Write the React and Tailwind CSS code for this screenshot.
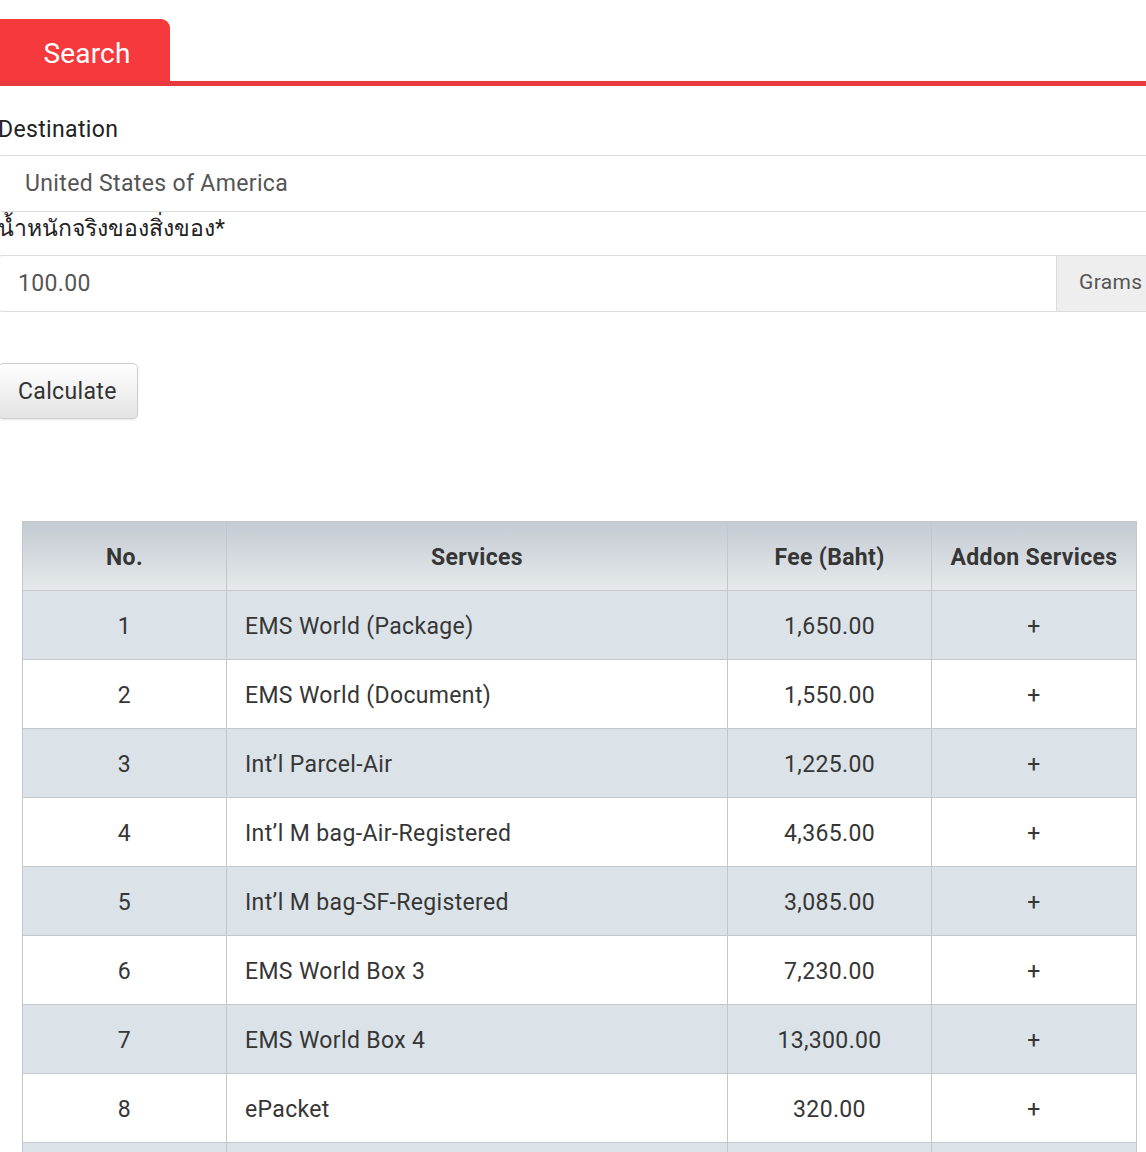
import React from "react";

const rows = [
  ["1", "EMS World (Package)", "1,650.00"],
  ["2", "EMS World (Document)", "1,550.00"],
  ["3", "Int’l Parcel-Air", "1,225.00"],
  ["4", "Int’l M bag-Air-Registered", "4,365.00"],
  ["5", "Int’l M bag-SF-Registered", "3,085.00"],
  ["6", "EMS World Box 3", "7,230.00"],
  ["7", "EMS World Box 4", "13,300.00"],
  ["8", "ePacket", "320.00"],
  ["9", "", ""],
];

export default function App() {
  return (
    <div
      className="w-[1146px] h-[1152px] overflow-hidden bg-white text-[#222] tracking-[0.35px]"
      style={{ fontFamily: 'Roboto, "Noto Sans", "DejaVu Sans", sans-serif' }}
    >
      <div className="pt-[19px]">
        <div className="h-[62px] w-[170px] bg-[#f5393d] rounded-tr-[9px] flex items-center justify-center pt-[8px] pl-[4px] text-white text-[28px] tracking-[0.2px]">
          Search
        </div>
        <div className="h-[5px] bg-[#e8393d]" />
      </div>

      <div className="w-[1170px] -ml-[2px]">
        <div className="mt-[29px] text-[23px] leading-[30px] text-[#222]">Destination</div>
        <div className="mt-[10px] h-[57px] border border-[#dcdcdc] rounded-[4px] flex items-center pl-[26px] pt-[2px] text-[23px] text-[#555]">
          United States of America
        </div>
        <div className="mt-[2px] text-[23px] leading-[30px] text-[#222] tracking-normal">น้ำหนักจริงของสิ่งของ*</div>
        <div className="mt-[11px] h-[57px] flex">
          <div className="flex-1 border border-[#dcdcdc] rounded-l-[4px] flex items-center pl-[19px] pt-[2px] text-[23px] text-[#555]">
            100.00
          </div>
          <div className="w-[112px] ml-[-1px] bg-[#eeeeee] border border-[#dcdcdc] flex items-center pl-[22px] pb-[2px] text-[21px] text-[#555]">
            Grams
          </div>
        </div>
        <div className="mt-[51px] h-[56px] w-[140px] rounded-[5px] border border-[#cfcfcf] bg-gradient-to-b from-white to-[#e4e4e4] shadow-[0_1px_2px_rgba(0,0,0,0.1)] flex items-center pl-[19px] pt-[2px] text-[23px] text-[#333]">
          Calculate
        </div>
      </div>

      <div className="mt-[102px] ml-[22px] w-[1114px]">
        <table className="w-full border-collapse table-fixed text-[23px] text-[#363636]">
          <colgroup>
            <col className="w-[204px]" />
            <col className="w-[501px]" />
            <col className="w-[204px]" />
            <col className="w-[205px]" />
          </colgroup>
          <thead>
            <tr className="h-[69px] bg-gradient-to-b from-[#c4cbd2] to-[#e6eaed]">
              <th className="border border-[#c3c7cb] font-bold text-center pt-[4px]">No.</th>
              <th className="border border-[#c3c7cb] font-bold text-center pt-[4px]">Services</th>
              <th className="border border-[#c3c7cb] font-bold text-center pt-[4px]">Fee (Baht)</th>
              <th className="border border-[#c3c7cb] font-bold text-center pt-[4px]">Addon Services</th>
            </tr>
          </thead>
          <tbody>
            {rows.map((r, i) => (
              <tr key={i} className={i % 2 === 0 ? "h-[69px] bg-[#dbe2e8]" : "h-[69px] bg-white"}>
                <td className="border border-[#c3c7cb] text-center pt-[5px]">{r[0]}</td>
                <td className="border border-[#c3c7cb] pl-[18px] pt-[5px]">{r[1]}</td>
                <td className="border border-[#c3c7cb] text-center pt-[5px]">{r[2]}</td>
                <td className="border border-[#c3c7cb] text-center pt-[5px]">{r[1] ? "+" : ""}</td>
              </tr>
            ))}
          </tbody>
        </table>
      </div>
    </div>
  );
}
